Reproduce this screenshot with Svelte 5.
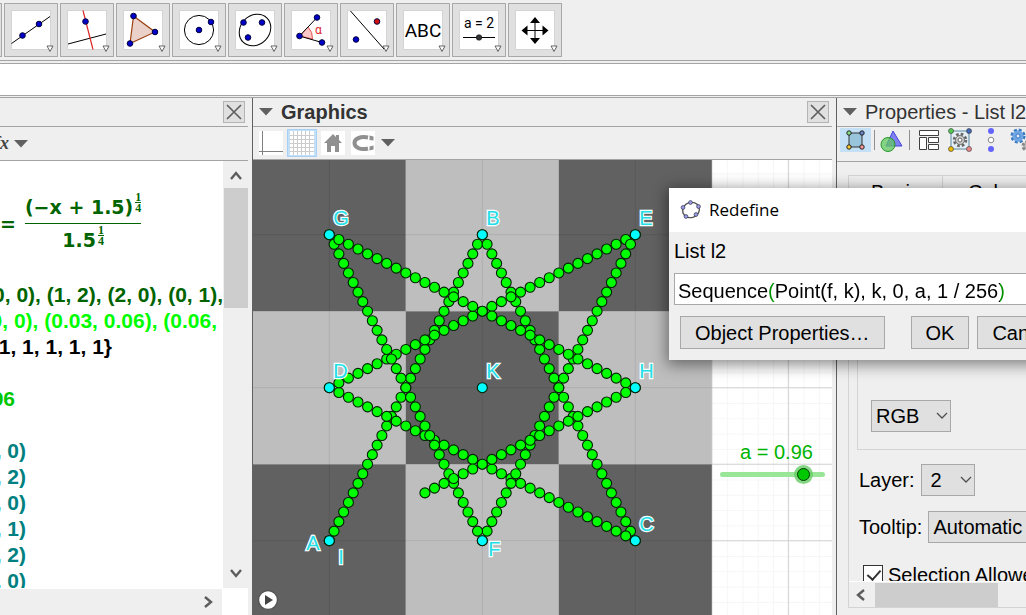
<script lang="ts">
	const unit = 153;
	const origin = { x: 76.3, y: 380.7 };
	const count = 246;
	const stepsPerEdge = 32;

	// Corners of the open star, visited in order
	const path = [
		[0, 0], [1, 2], [2, 0], [0, 1], [2, 2], [1, 0], [0, 2], [2, 1], [0, 0]
	];

	const px = (x: number) => origin.x + x * unit;
	const py = (y: number) => origin.y - y * unit;

	const trail = Array.from({ length: count + 1 }, (_, k) => {
		const edge = Math.floor(k / stepsPerEdge);
		const t = (k % stepsPerEdge) / stepsPerEdge;
		const [x0, y0] = path[edge];
		const [x1, y1] = path[edge + 1];
		return { x: px(x0 + (x1 - x0) * t), y: py(y0 + (y1 - y0) * t) };
	});

	const cells = [0, 1, 2].flatMap((x) =>
		[0, 1, 2].map((y) => ({ x, y, dark: (x + y) % 2 === 0 }))
	);

	const points = [
		{ name: 'A', x: 0, y: 0, dx: -23, dy: 9 },
		{ name: 'B', x: 1, y: 2, dx: 4, dy: -10 },
		{ name: 'C', x: 2, y: 0, dx: 4, dy: -10 },
		{ name: 'D', x: 0, y: 1, dx: 4, dy: -10 },
		{ name: 'E', x: 2, y: 2, dx: 4, dy: -10 },
		{ name: 'F', x: 1, y: 0, dx: 6, dy: 15 },
		{ name: 'G', x: 0, y: 2, dx: 4, dy: -10 },
		{ name: 'H', x: 2, y: 1, dx: 4, dy: -10 },
		{ name: 'I', x: 0, y: 0, dx: 9, dy: 23 },
		{ name: 'K', x: 1, y: 1, dx: 4, dy: -10 }
	];

	const rows = [
		{ text: '{(0, 0), (1, 2), (2, 0), (0, 1),', end: 223, color: '#006400' },
		{ text: '{(0, 0), (0.03, 0.06), (0.06,', end: 217, color: '#00ff00' },
		{ text: '{1, 1, 1, 1, 1}', end: 112, color: '#000000' },
		{ text: '', end: 0, color: '#000000' },
		{ text: 'a = 0.96', end: 15, color: '#00c800' },
		{ text: '', end: 0, color: '#000000' },
		{ text: 'A = (0, 0)', end: 26, color: '#008080' },
		{ text: 'B = (1, 2)', end: 26, color: '#008080' },
		{ text: 'C = (2, 0)', end: 26, color: '#008080' },
		{ text: 'D = (0, 1)', end: 26, color: '#008080' },
		{ text: 'E = (2, 2)', end: 26, color: '#008080' },
		{ text: 'F = (1, 0)', end: 26, color: '#008080' }
	];

	const tools = [
		'Point', 'Line', 'Perpendicular Line', 'Polygon', 'Circle', 'Ellipse',
		'Angle', 'Reflect', 'Text', 'Slider', 'Move View'
	];

	let a = $state(0.96);
	let definition = $state('Sequence(Point(f, k), k, 0, a, 1 / 256)');
</script>

{#snippet dot(x: number, y: number, fill = '#0000c8')}
	<circle cx={x} cy={y} r="2.8" {fill} stroke="#00003c" stroke-width="1" />
{/snippet}

{#snippet caret()}
	<svg class="caret" viewBox="0 0 14 8" aria-hidden="true"><path d="M0 0h14L7 7.5z" fill="#606060" /></svg>
{/snippet}

{#snippet arrow(d: string)}
	<svg class="arrow" viewBox="0 0 12 12" aria-hidden="true">
		<path {d} fill="none" stroke="#5c5c5c" stroke-width="2.4" />
	</svg>
{/snippet}

{#snippet close()}
	<button class="close" aria-label="Close">
		<svg viewBox="0 0 20 20"><path d="M3 3l14 14M17 3L3 17" stroke="#606060" stroke-width="1.7" /></svg>
	</button>
{/snippet}

{#snippet chevron()}
	<svg class="chevron" viewBox="0 0 12 8" aria-hidden="true">
		<path d="M1 1l5 5 5-5" fill="none" stroke="#505050" stroke-width="1.3" />
	</svg>
{/snippet}

<div class="app">
	<div class="toolbar">
		{#each tools as tool}
			<button class="tool" aria-label={tool}>
				<svg viewBox="0 0 40 40" aria-hidden="true">
					<rect x=".5" y=".5" width="39" height="39" fill="#fff" stroke="#d4d4d4" />
					{#if tool === 'Line'}
						<path d="M.5 33.5L39 6.5" stroke="#000" />
						{@render dot(11.5, 25.5)}
						{@render dot(28, 14)}
					{:else if tool === 'Perpendicular Line'}
						<path d="M1 34L39 24" stroke="#000" />
						<path d="M16 .5L26 39.5" stroke="#dc2828" stroke-width="1.2" />
						{@render dot(18.5, 11.5)}
					{:else if tool === 'Polygon'}
						<path d="M10.5 6L32 22 7 33.5z" fill="#ead2ca" stroke="#9c4010" stroke-width="1.2" />
						{@render dot(10.5, 6)}
						{@render dot(32, 22)}
						{@render dot(7, 33.5)}
					{:else if tool === 'Circle'}
						<circle cx="20" cy="20" r="14.6" fill="none" stroke="#000" />
						{@render dot(20, 20)}
						{@render dot(32, 12)}
					{:else if tool === 'Ellipse'}
						<ellipse cx="20" cy="20" rx="17" ry="14.5" fill="none" stroke="#000" transform="rotate(-46 20 20)" />
						{@render dot(8.5, 12.5)}
						{@render dot(27, 12.5)}
						{@render dot(13, 27.5)}
					{:else if tool === 'Angle'}
						<path d="M8.5 26L17 17Q22 22 21.500 29z" fill="#fcc8c8" stroke="#e03030" stroke-width=".8" />
						<path d="M26 7.500L8.500 26L31 32.500" fill="none" stroke="#000" />
						<text x="24" y="24" font-size="12" fill="#dc2828">α</text>
						{@render dot(26, 7.5)}
						{@render dot(8.5, 26)}
						{@render dot(31, 32.5)}
					{:else if tool === 'Reflect'}
						<path d="M3.500 1L37 39" stroke="#000" />
						{@render dot(30, 11.5, '#d01010')}
						{@render dot(9, 29.5)}
					{:else if tool === 'Text'}
						<text x="20" y="27" text-anchor="middle" font-size="19">ABC</text>
					{:else if tool === 'Slider'}
						<text x="20" y="18" text-anchor="middle" font-size="14">a = 2</text>
						<path d="M4 27.500h32" stroke="#000" />
						<circle cx="20" cy="27.500" r="2.8" fill="#333" stroke="#000" stroke-width=".5" />
					{:else if tool === 'Move View'}
						<path d="M20 11v19M10 20.500h20" stroke="#000" />
						<path d="M20 7l5 6H15zM20 34l5-6H15zM6.500 20.500l6-5v10zM33.500 20.500l-6-5v10z" />
					{/if}
				</svg>
				<svg class="more" viewBox="0 0 8 8" aria-hidden="true">
					<path d="M1 1h6L4 6.500z" fill="#fff" stroke="#555" stroke-width=".9" />
				</svg>
			</button>
		{/each}
	</div>
	<div class="inputbar"></div>

	<main class="panels">
		<section class="panel algebra" aria-label="Algebra">
			<header class="titlebar end">{@render close()}</header>
			<div class="stylebar">
				<span class="fx"><i>f</i><i>x</i></span>
				{@render caret()}
			</div>
			<div class="algebra-body">
				<div class="objects">
					<div class="formula">
						<span>=</span>
						<span class="fraction">
							<span class="part">(−x + 1.5)<sup class="fraction small"><span>1</span><span class="den">4</span></sup></span>
							<span class="part den">1.5<sup class="fraction small"><span>1</span><span class="den">4</span></sup></span>
						</span>
					</div>
					{#each rows as row}
						<div class="object" style:width="{row.end}px" style:color={row.color}>
							<span>{row.text}</span>
						</div>
					{/each}
				</div>
				<div class="vscroll">
					{@render arrow('M1 9l5-6 5 6')}
					<div class="vthumb"></div>
					{@render arrow('M1 3l5 6 5-6')}
				</div>
			</div>
			<div class="hscroll">{@render arrow('M3 1l6 5-6 5')}</div>
		</section>

		<section class="panel graphics" aria-label="Graphics">
			<header class="titlebar">
				{@render caret()}
				<h2>Graphics</h2>
				{@render close()}
			</header>
			<div class="stylebar">
				<button class="style" aria-label="Axes">
					<svg viewBox="0 0 24 24"><path d="M0 0h24v24H0z" fill="#fff" /><path d="M3.500 0v24M0 20.500h24" stroke="#808080" /></svg>
				</button>
				<button class="style grid on" aria-label="Grid">
					<svg viewBox="0 0 24 24">
						<path d="M0 0h24v24H0z" fill="#fff" />
						<path d="M3.500 0v24M7.500 0v24M11.500 0v24M15.500 0v24M19.500 0v24M0 4.500h24M0 8.500h24M0 12.500h24M0 16.500h24M0 20.500h24" stroke="#ccc" />
					</svg>
				</button>
				<button class="style" aria-label="Home">
					<svg viewBox="0 0 24 24"><path d="M0 0h24v24H0z" fill="#fff" /><path d="M12 3L3 12h3v9h4v-6h4v6h4v-9h3l-3-3V4h-3v2z" fill="#909090" /></svg>
				</button>
				<button class="style" aria-label="Snapping">
					<svg viewBox="0 0 24 24">
						<path d="M0 0h24v24H0z" fill="#fff" />
						<path d="M17 6.500C9 5 3.500 8 3.500 12S9 19.500 17 17.500" fill="none" stroke="#909090" stroke-width="4" />
						<path d="M18.500 4.500l4 1v4l-4-.5zM18.500 15.500l4-1v4l-4 1z" fill="#909090" />
					</svg>
				</button>
				{@render caret()}
			</div>
			<div class="view">
				<svg class="canvas">
					<defs>
						<pattern id="minor" x={origin.x} y={origin.y} width="15.3" height="15.3" patternUnits="userSpaceOnUse">
							<path d="M.5 0v15.3M0 .5h15.3" stroke="#000" stroke-opacity=".035" />
						</pattern>
						<pattern id="major" x={origin.x - 0.5} y={origin.y - 0.5} width="76.5" height="76.5" patternUnits="userSpaceOnUse">
							<path d="M.5 0v76.5M0 .5h76.5" stroke="#000" stroke-opacity=".16" />
						</pattern>
					</defs>
					<rect width="100%" height="100%" fill="url(#minor)" />
					<rect width="100%" height="100%" fill="url(#major)" />
					{#each cells as cell}
						<rect
							x={px(cell.x - 0.5)}
							y={py(cell.y + 0.5)}
							width={unit}
							height={unit}
							fill={cell.dark ? '#5e5e5e' : '#bdbdbd'}
							fill-opacity=".98"
						/>
						<path
							d="M{px(cell.x)} {py(cell.y - 0.5)}v-{unit}M{px(cell.x - 0.5)} {py(cell.y)}h{unit}"
							stroke="#000"
							stroke-opacity=".08"
						/>
					{/each}
					{#each trail as p}
						<circle class="trace" cx={p.x} cy={p.y} r="5" />
					{/each}
					{#each points as p}
						<circle class="point" cx={px(p.x)} cy={py(p.y)} r="5" />
						<text x={px(p.x) + p.dx} y={py(p.y) + p.dy}>{p.name}</text>
					{/each}
				</svg>
				<div class="slider">
					<label for="a">a = {a}</label>
					<input id="a" type="range" min="0" max="1.15" step="0.01" bind:value={a} />
				</div>
				<button class="play" aria-label="Play">
					<svg viewBox="0 0 22 22">
						<circle cx="11" cy="11" r="9.5" fill="#fff" stroke="#555" stroke-width="1.4" />
						<path d="M8 6l8 5-8 5z" fill="#444" />
					</svg>
				</button>
			</div>
		</section>

		<section class="panel properties" aria-label="Properties">
			<header class="titlebar">
				{@render caret()}
				<h2>Properties - List l2</h2>
			</header>
			<div class="stylebar">
				<button class="style on" aria-label="Objects">
					<svg viewBox="0 0 24 24">
						<path d="M5 5h13v14H5z" fill="#98c4dc" stroke="#333" />
						<g stroke="#222"><circle cx="5" cy="5" r="2.200" fill="#8d8" /><circle cx="18" cy="5" r="2.200" fill="#68c" /><circle cx="5" cy="19" r="2.200" fill="#fc3" /><circle cx="18" cy="19" r="2.200" fill="#f99" /></g>
					</svg>
				</button>
				<i class="sep"></i>
				<button class="style" aria-label="Graphics settings">
					<svg viewBox="0 0 24 24">
						<path d="M14 3l9 15H7z" fill="#8080f0" stroke="#4444dd" />
						<circle cx="9" cy="16.500" r="7" fill="#60c860" fill-opacity=".75" stroke="#289828" />
					</svg>
				</button>
				<i class="sep"></i>
				<button class="style" aria-label="Layout">
					<svg viewBox="0 0 24 24"><path d="M2.500 2.500h19v5h-19zM2.500 9.500h7v12h-7zM11.500 9.500h10v5h-10zM11.500 16.500h10v5h-10z" fill="#fff" stroke="#404040" /></svg>
				</button>
				<button class="style" aria-label="Defaults">
					<svg viewBox="0 0 24 24">
						<path d="M3 3h18v18H3z" fill="#e4eef4" stroke="#5888a0" />
						<circle cx="12" cy="12" r="5.500" fill="none" stroke="#666" stroke-dasharray="2.400 1.920" stroke-width="3.500" />
						<circle cx="12" cy="12" r="4.500" fill="#ccc" stroke="#777" />
						<circle cx="12" cy="12" r="2" fill="#fff" stroke="#666" />
						<g stroke="#333" stroke-width=".6"><circle cx="3" cy="3" r="2.500" fill="#5c5" /><circle cx="21" cy="3" r="2.500" fill="#46b" /><circle cx="3" cy="21" r="2.500" fill="#eb0" /><circle cx="21" cy="21" r="2.500" fill="#e88" /></g>
					</svg>
				</button>
				<button class="style" aria-label="Slider settings">
					<svg viewBox="0 0 24 24"><circle cx="12" cy="3" r="3" fill="#6464ff" /><circle cx="12" cy="12" r="2.800" fill="#fff" stroke="#888" /><circle cx="12" cy="21" r="3" fill="#6464ff" /></svg>
				</button>
				<button class="style" aria-label="Advanced">
					<svg viewBox="0 0 24 24">
						<circle cx="8" cy="8" r="5.500" fill="#6ea6e4" stroke="#3c78c0" stroke-width="4" stroke-dasharray="2.600 1.720" />
						<circle cx="8" cy="8" r="5.500" fill="#6ea6e4" />
						<circle cx="8" cy="8" r="2" fill="#eef" stroke="#3c78c0" />
						<circle cx="17" cy="18" r="4" fill="#bbb" stroke="#888" stroke-width="3" stroke-dasharray="2.600 1.590" />
					</svg>
				</button>
			</div>
			<div class="sheet">
				<div class="tabs">
					<button>Basic</button>
					<button>Color</button>
				</div>
				<div class="sheet-scroll">
					<div class="color-group">
						<span class="select">
							<select aria-label="Color model"><option>RGB</option></select>
							{@render chevron()}
						</span>
					</div>
					<div class="field">
						<label for="layer">Layer:</label>
						<span class="select layer">
							<select id="layer"><option>2</option></select>
							{@render chevron()}
						</span>
					</div>
					<div class="field">
						<label for="tooltip">Tooltip:</label>
						<span class="select tooltip">
							<select id="tooltip"><option>Automatic</option></select>
							{@render chevron()}
						</span>
					</div>
					<label class="check"><input type="checkbox" checked />Selection Allowed</label>
				</div>
				<div class="sheet-hscroll">
					{@render arrow('M9 1L3 6l6 5')}
					<div class="hthumb"></div>
				</div>
			</div>
		</section>
	</main>

	<div class="dialog" role="dialog" aria-labelledby="dialog-title">
		<header>
			<svg viewBox="0 0 22 22" aria-hidden="true">
				<ellipse cx="11" cy="11" rx="8.500" ry="7.500" fill="none" stroke="#555" stroke-width="1.400" transform="rotate(-20 11 11)" />
				<g fill="#9c9cf0" stroke="#334" stroke-width=".7"><circle cx="10.500" cy="3.500" r="1.900" /><circle cx="18.500" cy="7.500" r="1.900" /><circle cx="16" cy="15.500" r="1.900" /><circle cx="6" cy="17.500" r="1.900" /><circle cx="3" cy="8.500" r="1.900" /></g>
			</svg>
			<span id="dialog-title">Redefine</span>
		</header>
		<form onsubmit={(e) => e.preventDefault()}>
			<label for="definition">List l2</label>
			<input id="definition" type="text" bind:value={definition} spellcheck="false" />
			<div class="actions">
				<button type="button" class="object-props">Object Properties…</button>
				<button type="submit">OK</button>
				<button type="button">Cancel</button>
			</div>
		</form>
	</div>
</div>

<style>
	:global(body) {
		margin: 0;
	}

	.app {
		position: relative;
		display: flex;
		flex-direction: column;
		height: 100vh;
		overflow: hidden;
		background: #efefef;
		color: #000;
		font-family: 'Liberation Sans', Arial, sans-serif;
		font-size: 20px;
		line-height: 24px;
	}

	.app :global(*) {
		box-sizing: border-box;
	}

	button,
	input,
	select {
		margin: 0;
		padding: 0;
		border: 0;
		border-radius: 0;
		background: none;
		color: inherit;
		font: inherit;
	}

	svg {
		display: block;
		flex-shrink: 0;
	}

	.toolbar {
		display: flex;
		gap: 2px;
		flex-shrink: 0;
		height: 61px;
		padding-top: 3px;
		margin-left: -52px;
		border-bottom: 1px solid #a4a4a4;
	}

	.tool {
		position: relative;
		flex-shrink: 0;
		width: 54px;
		height: 54px;
		padding: 6px;
		border: 1px solid #a8a8a8;
		background: #e0e0e0;
		font-family: Roboto, sans-serif;
	}

	.tool > svg:first-child {
		width: 40px;
		height: 40px;
	}

	.tool .more {
		position: absolute;
		right: 3px;
		bottom: 3px;
		width: 8px;
		height: 8px;
	}

	.inputbar {
		flex-shrink: 0;
		height: 33px;
		margin-top: 2px;
		background: #fff;
		border: solid #a4a4a4;
		border-width: 1px 0;
		margin-bottom: 1px;
	}

	.panels {
		display: grid;
		grid-template-columns: 248px minmax(0, 1fr) 190px;
		grid-template-rows: minmax(0, 1fr);
		flex: 1;
		min-height: 0;
		border-top: 1px solid #a4a4a4;
	}

	.panel {
		display: flex;
		flex-direction: column;
		min-width: 0;
		overflow: hidden;
	}

	.titlebar {
		display: flex;
		align-items: center;
		flex-shrink: 0;
		height: 29px;
		gap: 8px;
		padding: 0 3px 0 6px;
		border-bottom: 1px solid #a4a4a4;
	}

	.titlebar.end {
		justify-content: flex-end;
	}

	h2 {
		flex: 1;
		margin: 0;
		color: #333;
		font-size: 20px;
		line-height: 24px;
		white-space: nowrap;
	}

	.close {
		width: 22px;
		height: 22px;
		border: 1px solid #b4b4b4;
		background: #e0e0e0;
	}

	.stylebar {
		display: flex;
		align-items: center;
		flex-shrink: 0;
		height: 34px;
		border-bottom: 1px solid #a4a4a4;
	}

	.caret {
		width: 14px;
		height: 8px;
	}

	.arrow {
		width: 12px;
		height: 12px;
	}

	.fx {
		display: flex;
		width: 14px;
		padding-right: 5px;
		justify-content: flex-end;
		color: #444;
		font: bold 18px 'Liberation Serif', serif;
	}

	.algebra-body {
		display: flex;
		flex: 1;
		min-height: 0;
		background: #fff;
	}

	.objects {
		flex: 1;
		min-width: 0;
		overflow: hidden;
		font-size: 21px;
		font-weight: bold;
		line-height: 26px;
	}

	.formula {
		display: flex;
		align-items: center;
		gap: 9px;
		height: 121px;
		padding-top: 4px;
		color: #006400;
		font-family: 'DejaVu Sans', sans-serif;
		font-size: 19px;
		white-space: nowrap;
	}

	.fraction {
		display: flex;
		flex-direction: column;
	}

	.part {
		display: flex;
		justify-content: center;
		padding: 1px 0;
		line-height: 30px;
	}

	.den {
		border-top: 1px solid #006400;
	}

	.small {
		align-self: flex-start;
		margin-left: 2px;
		font-family: 'Liberation Serif', serif;
		font-size: 12px;
		line-height: 10px;
	}

	.object {
		display: flex;
		justify-content: flex-end;
		height: 26px;
		white-space: nowrap;
	}

	.vscroll {
		display: flex;
		flex-direction: column;
		align-items: center;
		gap: 6px;
		width: 25px;
		padding: 9px 0;
		background: #efefef;
	}

	.vthumb {
		width: 24px;
		height: 120px;
		margin-bottom: auto;
		background: #cdcdcd;
	}

	.hscroll {
		display: flex;
		align-items: center;
		justify-content: flex-end;
		flex-shrink: 0;
		height: 27px;
		padding-right: 8px;
		border-right: 26px solid #fff;
		border-top: 1px solid #fff;
	}

	.graphics {
		margin: 0 4px;
		border-left: 1px solid #606060;
	}

	.graphics .stylebar {
		height: 33px;
		padding-left: 6px;
		gap: 6px;
	}

	.style {
		display: flex;
		align-items: center;
		justify-content: center;
		flex-shrink: 0;
		width: 24px;
		height: 28px;
	}

	.style svg {
		width: 24px;
		height: 24px;
	}

	.style.on {
		width: 30px;
		border: 1px solid #a8d0f4;
		background: #c4e0f7;
	}

	.graphics .style.on {
		margin: 0 -2px;
	}

	.view {
		position: relative;
		flex: 1;
		min-height: 0;
		background: #fff;
	}

	.canvas {
		width: 100%;
		height: 100%;
	}

	.canvas text {
		fill: #24dde6;
		stroke: #f4ffff;
		stroke-width: 2.4px;
		paint-order: stroke;
		font-size: 20px;
	}

	.trace,
	.point {
		fill: #00ff00;
		stroke: #002000;
		stroke-width: 1.1px;
	}

	.point {
		fill: #00ffff;
	}

	.slider {
		position: absolute;
		left: 467px;
		top: 280px;
		display: flex;
		flex-direction: column;
		align-items: center;
		width: 105px;
		color: #00b400;
	}

	.slider label {
		padding-left: 8px;
	}

	.slider input {
		width: 105px;
		height: 20px;
		appearance: none;
		outline: none;
	}

	.slider input::-webkit-slider-runnable-track {
		height: 5px;
		border-radius: 3px;
		background: #99e699;
	}

	.slider input::-webkit-slider-thumb {
		width: 13px;
		height: 13px;
		margin-top: -4px;
		appearance: none;
		border: 1px solid #003c00;
		border-radius: 50%;
		background: #00c800;
		box-shadow: 0 0 0 3px #66cc66cc;
	}

	.play {
		position: absolute;
		left: 4px;
		bottom: 4px;
		width: 22px;
		height: 22px;
	}

	.properties {
		border-left: 1px solid #606060;
	}

	.properties h2 {
		font-weight: normal;
	}

	.properties .stylebar {
		height: 35px;
		gap: 6px;
		padding: 0 0 8px 3px;
	}

	.properties .style {
		width: 25px;
	}

	.properties .style.on {
		width: 31px;
		height: 24px;
		border: 0;
	}

	.sep {
		flex-shrink: 0;
		width: 1px;
		height: 20px;
		background: #909090;
	}

	.on + .sep {
		margin: 0 -3px;
	}

	.sheet {
		display: flex;
		flex-direction: column;
		flex: 1;
		min-height: 0;
		margin: 13px 0 7px 11px;
		border: solid #d4d4d4;
		border-width: 1px 0 1px 1px;
	}

	.tabs {
		display: flex;
		flex-shrink: 0;
		height: 32px;
		border-bottom: 1px solid #d4d4d4;
	}

	.tabs button {
		flex-shrink: 0;
		padding: 0 22px;
		border-right: 1px solid #d4d4d4;
	}

	.tabs button + button {
		padding: 0 25px;
	}

	.sheet-scroll {
		flex: 1;
		min-height: 0;
		overflow: hidden;
		padding-left: 8px;
	}

	.color-group {
		display: flex;
		align-items: flex-end;
		height: 242px;
		padding: 0 0 17px 13px;
		margin-bottom: 14px;
		border: solid #d4d4d4;
		border-width: 0 0 1px 1px;
	}

	.select {
		position: relative;
		flex-shrink: 0;
		width: 80px;
		height: 32px;
	}

	.select select {
		width: 100%;
		height: 100%;
		padding-left: 4px;
		appearance: none;
		border: 1px solid #a8a8a8;
		background: #e0e0e0;
	}

	.chevron {
		position: absolute;
		right: 3px;
		top: 12px;
		width: 12px;
		height: 8px;
		pointer-events: none;
	}

	.select.layer {
		width: 54px;
	}

	.layer select {
		padding-left: 9px;
	}

	.select.tooltip {
		width: 130px;
	}

	.field {
		display: flex;
		align-items: center;
		gap: 6px;
		padding-left: 2px;
		margin-bottom: 15px;
	}

	.check {
		display: flex;
		align-items: center;
		gap: 5px;
		padding: 5px 0 0 6px;
		white-space: nowrap;
	}

	.check input {
		flex-shrink: 0;
		width: 20px;
		height: 20px;
		appearance: none;
		border: 1px solid #333;
		background: #fff;
	}

	.check input:checked::before {
		content: '';
		display: block;
		width: 6px;
		height: 11px;
		margin: 1px 0 0 6px;
		border: solid #333;
		border-width: 0 2px 2px 0;
		transform: rotate(42deg);
	}

	.sheet-hscroll {
		display: flex;
		align-items: center;
		flex-shrink: 0;
		gap: 8px;
		height: 26px;
		padding-left: 6px;
		border-top: 1px solid #fff;
	}

	.hthumb {
		width: 123px;
		height: 24px;
		background: #cdcdcd;
	}

	.dialog {
		position: absolute;
		left: 669px;
		top: 188px;
		width: 394px;
		background: #efefef;
		box-shadow: 0 3px 14px 2px rgb(0 0 0 / 45%);
	}

	.dialog header {
		display: flex;
		align-items: center;
		gap: 7px;
		height: 44px;
		padding-left: 11px;
		background: #fff;
		font-family: 'Open Sans', sans-serif;
		font-size: 17px;
	}

	.dialog header svg {
		width: 22px;
		height: 22px;
	}

	.dialog form {
		display: flex;
		flex-direction: column;
		padding: 7px 0 11px 5px;
	}

	.dialog input {
		height: 32px;
		margin: 10px 0 11px;
		padding-left: 3px;
		border: 1px solid #a8a8a8;
		background: #fff;
	}

	/* The outer pair of brackets is highlighted */
	#definition {
		padding-top: 4px;
		background:
			linear-gradient(90deg, #000 93px, #009000 93px 100px, #000 100px 325px, #009000 325px 334px, #000 334px) text,
			#fff;
		-webkit-text-fill-color: transparent;
		caret-color: #000;
	}

	.actions {
		display: flex;
		gap: 8px;
		padding-left: 6px;
	}

	.actions button {
		height: 33px;
		padding: 0 14px;
		border: 1px solid #a8a8a8;
		background: #e0e0e0;
	}

	.actions .object-props {
		width: 205px;
		margin-right: 18px;
		white-space: nowrap;
	}
</style>
